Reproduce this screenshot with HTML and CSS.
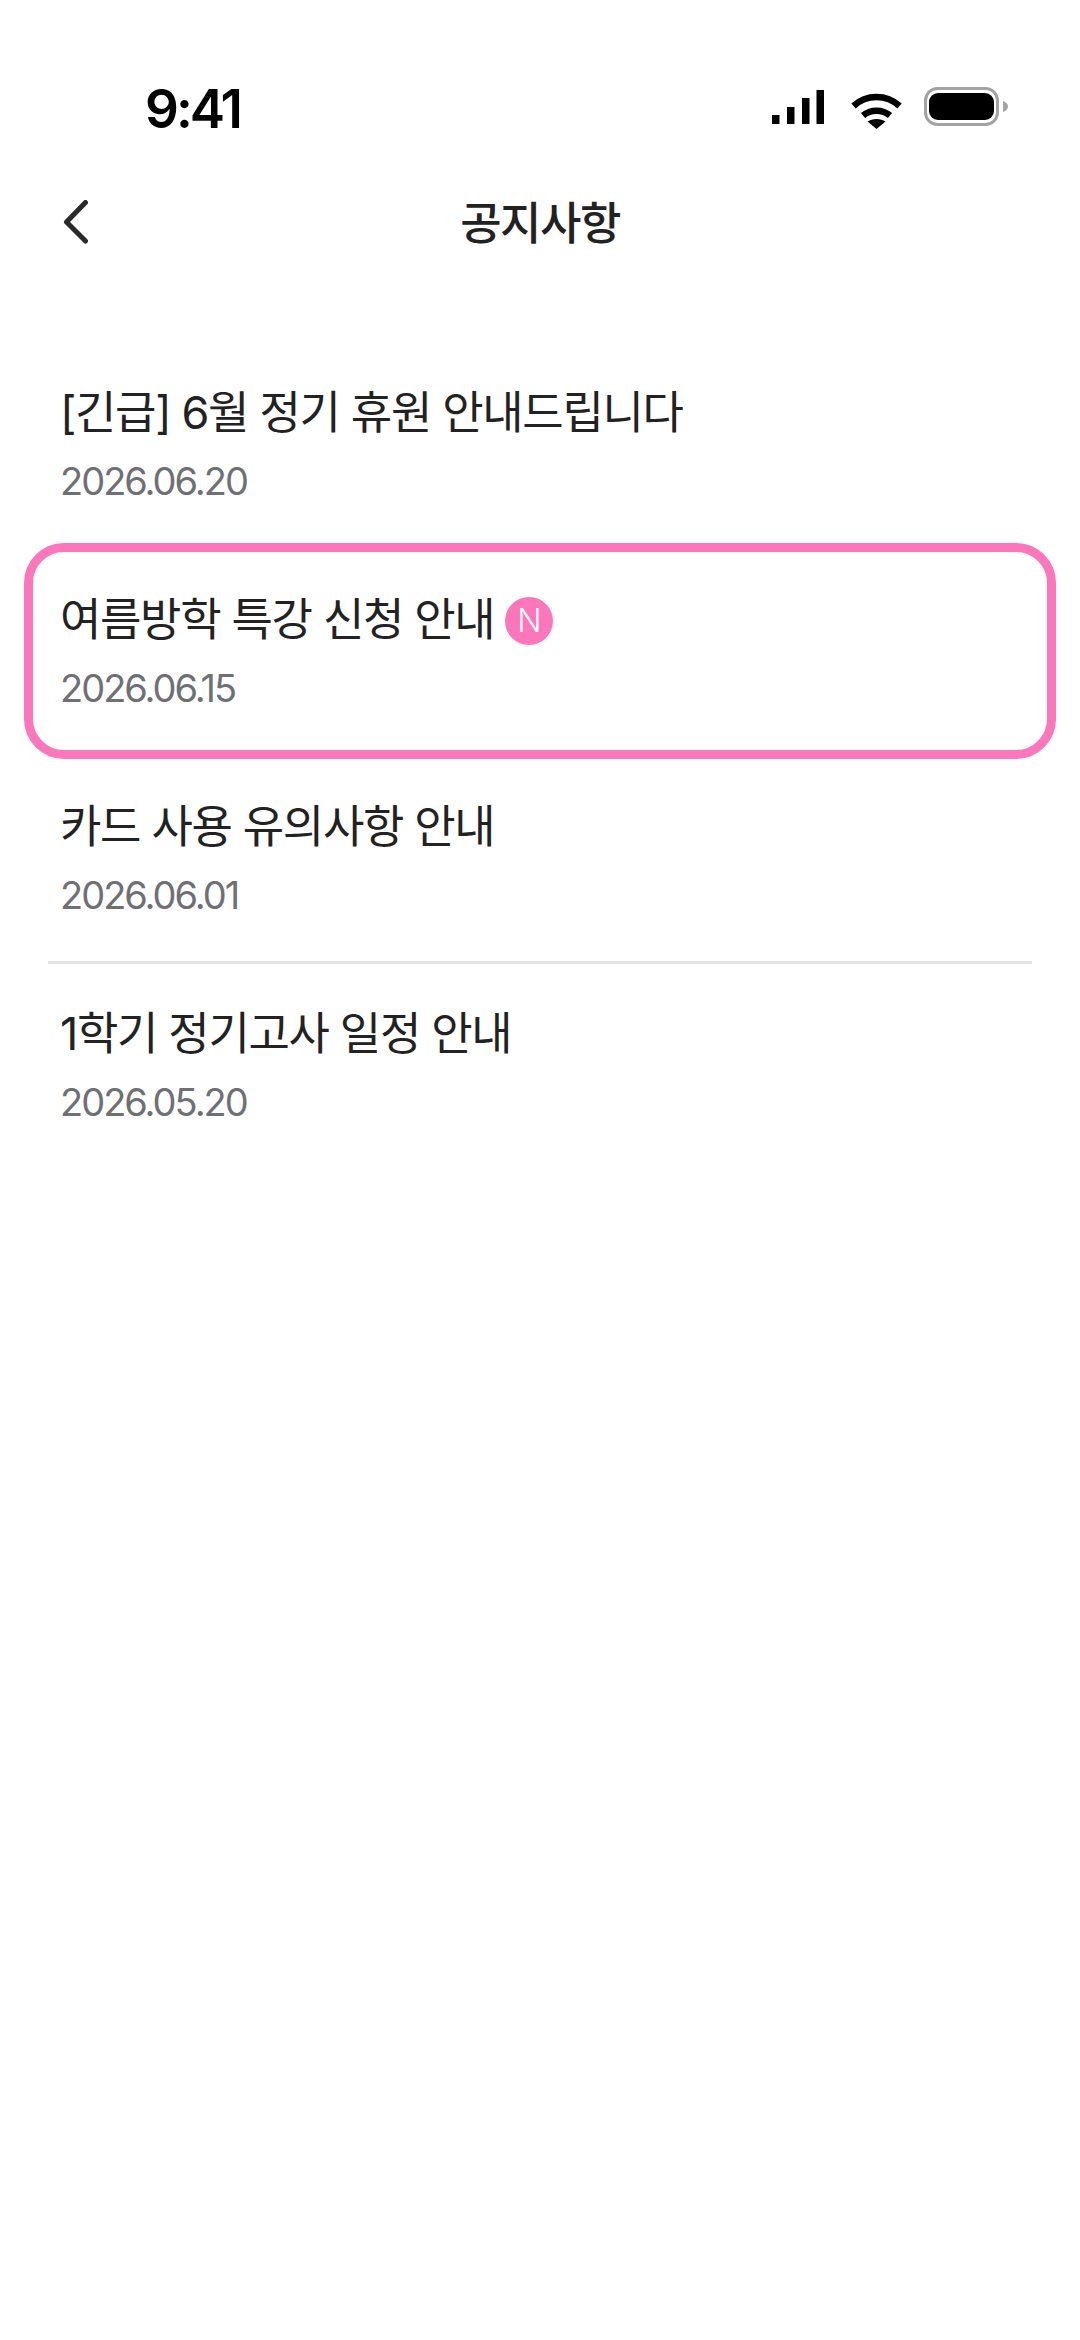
FILE: index.html
```html
<!DOCTYPE html>
<html lang="ko">
<head>
<meta charset="utf-8">
<title>공지사항</title>
<link rel="stylesheet" href="styles.css">
</head>
<body>
<div class="screen">
  <div class="status">
    <span class="time">9:41</span>
    <div class="status-icons">
      <svg class="sig" width="52" height="34" viewBox="0 0 52 34"><rect x="0" y="25" width="7.500" height="9" fill="#000"/><rect x="15" y="17" width="7.500" height="17" fill="#000"/><rect x="30" y="8" width="7.500" height="26" fill="#000"/><rect x="44.500" y="0" width="7.500" height="34" fill="#000"/></svg>
      <svg class="wifi" width="51" height="36" viewBox="0 0 51 36"><path d="M2.500 13C15.500 1 35.500 1 48.500 13M12 22.500C19.500 16 31.500 16 39 22.500" fill="none" stroke="#000" stroke-width="6.500"/><path d="M16.500 28.500C21.500 25 29.500 25 34.500 28.500L25.500 36Z" fill="#000"/></svg>
      <svg class="batt" width="84" height="39" viewBox="0 0 84 39"><rect x="1.500" y="1.500" width="72" height="36" rx="12" fill="none" stroke="#a3a3a3" stroke-width="3"/><rect x="5" y="6" width="65" height="27" rx="9" fill="#000"/><path d="M79 14C82 15 84 17 84 19.500C84 22 82 24 79 25Z" fill="#a3a3a3"/></svg>
    </div>
  </div>
  <header class="nav">
    <svg class="back" width="32" height="48" viewBox="0 0 32 48"><path d="M25.500 2.500L6.500 22L25.500 41" fill="none" stroke="#2a2a2a" stroke-width="5" stroke-linecap="round" stroke-linejoin="round"/></svg>
    <h1 class="nav-title">공지사항</h1>
  </header>
  <ul class="list">
    <li class="row">
      <div class="row-title">[긴급] 6월 정기 휴원 안내드립니다</div>
      <div class="row-date">2026.06.20</div>
    </li>
    <li class="row row-active">
      <div class="row-title">여름방학 특강 신청 안내<span class="badge">N</span></div>
      <div class="row-date">2026.06.15</div>
    </li>
    <li class="row">
      <div class="row-title">카드 사용 유의사항 안내</div>
      <div class="row-date">2026.06.01</div>
    </li>
    <li class="row row-last">
      <div class="row-title">1학기 정기고사 일정 안내</div>
      <div class="row-date">2026.05.20</div>
    </li>
  </ul>
</div>
</body>
</html>
```
FILE: styles.css
```css
* { box-sizing: border-box; }
html, body { margin: 0; padding: 0; background: #fff; }
body { font-family: "Inter", "Noto Sans CJK KR", sans-serif; color: #222; }
.screen { width: 1080px; height: 2340px; overflow: hidden; background: #fff; }

.status { height: 187px; padding: 82px 72px 0 145px; display: flex; justify-content: space-between; align-items: flex-start; }
.time { font-size: 53px; line-height: 54px; font-weight: 600; color: #000; letter-spacing: -3px; }
.status-icons { display: flex; align-items: flex-start; padding-top: 5px; }
.sig { margin-top: 3px; margin-right: 27px; }
.wifi { margin-top: 6px; margin-right: 22px; }

.nav { height: 74px; display: flex; align-items: center; justify-content: center; position: relative; }
.back { position: absolute; left: 60px; top: 13px; }
.nav-title { margin: 0; font-size: 45px; line-height: 74px; font-weight: 500; color: #222; letter-spacing: -1.5px; }

.list { list-style: none; margin: 82px 48px 0; padding: 0; }
.row { height: 207px; padding: 38px 12px 0; border-bottom: 3px solid #e3e3e5; position: relative; }
.row-last { border-bottom: 0; }
.row-active::after { content: ""; position: absolute; left: -24px; right: -24px; top: -7px; bottom: -5px; border: 9px solid #fb76bb; border-radius: 40px; }
.row-title { font-size: 45px; line-height: 64px; color: #222; letter-spacing: -1.35px; display: flex; align-items: center; }
.row-date { margin-top: 11px; font-size: 38px; line-height: 50px; color: #6f7075; letter-spacing: -2px; }
.badge { width: 48px; height: 48px; margin: 2px 0 0 11px; border-radius: 50%; background: #fb76bb; color: #fff; font-size: 32px; font-weight: 300; line-height: 48px; text-align: center; letter-spacing: 0; }
```
